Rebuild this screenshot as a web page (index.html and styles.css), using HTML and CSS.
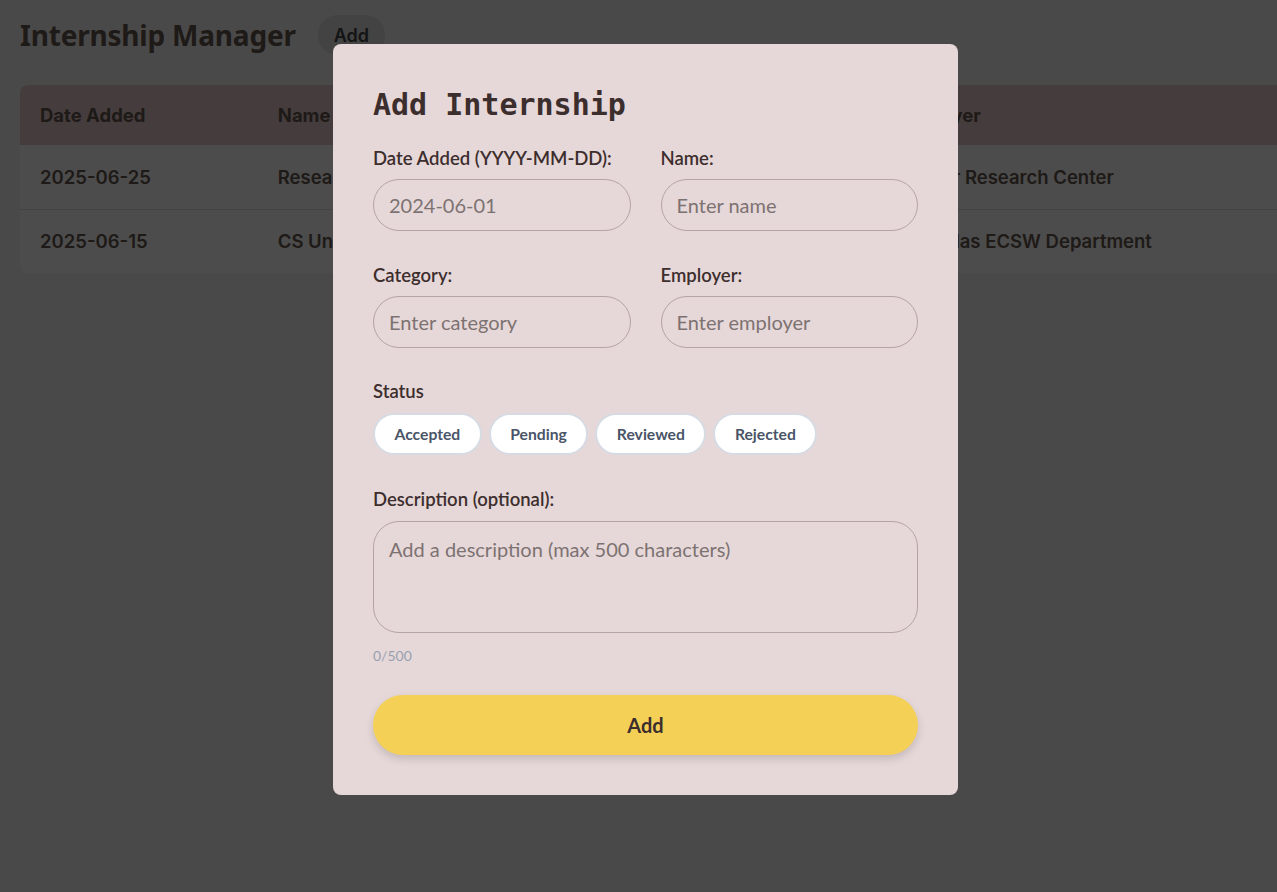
FILE: index.html
```html
<!DOCTYPE html>
<html lang="en">
<head>
<meta charset="utf-8">
<title>Internship Manager</title>
<link rel="stylesheet" href="styles.css">
</head>
<body>
<main class="page">
  <header class="page-header">
    <h1 class="page-title">Internship Manager</h1>
    <button class="header-add" type="button">Add</button>
  </header>
  <div class="table-wrap">
    <table class="table">
      <thead>
        <tr><th class="c-date">Date Added</th><th class="c-name">Name</th><th class="c-cat">Category</th><th class="c-emp">Employer</th><th class="c-status">Status</th></tr>
      </thead>
      <tbody>
        <tr><td>2025-06-25</td><td>Research Intern</td><td>Research</td><td>Cancer Research Center</td><td>Pending</td></tr>
        <tr><td>2025-06-15</td><td>CS Undergrad TA</td><td>Teaching</td><td>UT Dallas ECSW Department</td><td>Accepted</td></tr>
      </tbody>
    </table>
  </div>
</main>

<div class="overlay">
  <form class="modal">
    <h2 class="modal-title">Add Internship</h2>
    <div class="grid">
      <label class="field">
        <span class="label">Date Added (YYYY-MM-DD):</span>
        <input class="input" type="text" placeholder="2024-06-01">
      </label>
      <label class="field">
        <span class="label">Name:</span>
        <input class="input" type="text" placeholder="Enter name">
      </label>
      <label class="field">
        <span class="label">Category:</span>
        <input class="input" type="text" placeholder="Enter category">
      </label>
      <label class="field">
        <span class="label">Employer:</span>
        <input class="input" type="text" placeholder="Enter employer">
      </label>
    </div>
    <div class="status">
      <span class="label">Status</span>
      <div class="pills">
        <button class="pill" type="button">Accepted</button>
        <button class="pill" type="button">Pending</button>
        <button class="pill" type="button">Reviewed</button>
        <button class="pill" type="button">Rejected</button>
      </div>
    </div>
    <label class="field desc">
      <span class="label">Description (optional):</span>
      <textarea class="textarea" placeholder="Add a description (max 500 characters)"></textarea>
    </label>
    <div class="counter">0/500</div>
    <button class="submit" type="button">Add</button>
  </form>
</div>
</body>
</html>
```

FILE: styles.css
```css
* { box-sizing: border-box; }
html, body { margin: 0; padding: 0; }
body {
  background: #f7f3f3;
  font-family: "Inter", "Noto Sans", sans-serif;
  color: #67574d;
  overflow: hidden;
  height: 892px;
}
.page { padding: 13px 0 0 20px; }
.page-header { display: flex; align-items: center; gap: 22px; height: 44px; }
.page-title {
  margin: 0;
  font-family: "Noto Sans", "Open Sans", sans-serif;
  font-size: 28px;
  font-weight: 700;
  color: #67574d;
  letter-spacing: -0.2px;
}
.header-add {
  font-family: inherit;
  font-size: 18px;
  font-weight: 600;
  color: #444;
  background: #dfdfdf;
  border: none;
  border-radius: 20px;
  height: 40px;
  padding: 0 16px;
}
.table-wrap {
  margin-top: 28px;
  width: 1400px;
  border-radius: 8px;
  overflow: hidden;
  background: #fff;
}
.table { border-collapse: collapse; width: 100%; }
.table th, .table td {
  text-align: left;
  font-size: 18.5px;
  padding: 0 20px;
  white-space: nowrap;
}
.table th { background: #e6cbcb; font-weight: 700; height: 60px; }
.table td { font-weight: 600; height: 64px; border-top: 1px solid #dcdcdc; }
.table tbody tr:first-child td { border-top: none; }
.c-date { width: 239px; }
.c-name { width: 312px; }
.c-cat { width: 310px; }
.c-emp { width: 420px; }

.overlay {
  position: fixed;
  inset: 0;
  background: rgba(0, 0, 0, 0.7);
  display: flex;
  justify-content: center;
  align-items: flex-start;
  padding-top: 44px;
}
.modal {
  width: 625px;
  background: #e6d8d8;
  border-radius: 8px;
  padding: 41px 40px 40px;
  font-family: "Lato", "Noto Sans", sans-serif;
  color: #3d2e2e;
  margin-left: 14px;
}
.modal-title {
  margin: 0;
  font-family: "DejaVu Sans Mono", "Liberation Mono", monospace;
  font-size: 30px;
  font-weight: 700;
  color: #3d2e2e;
  line-height: 40px;
  height: 40px;
}
.grid {
  margin-top: 22px;
  display: grid;
  grid-template-columns: minmax(0, 1fr) minmax(0, 1fr);
  column-gap: 30px;
  row-gap: 33px;
}
.field { display: flex; flex-direction: column; gap: 10px; min-width: 0; }
.label { font-size: 18.5px; font-weight: 600; line-height: 22px; color: #3d2e2e; }
.input {
  width: 100%;
  height: 52px;
  border: 1px solid #b5a4a4;
  border-radius: 26px;
  background: transparent;
  padding: 0 15px;
  font-family: inherit;
  font-size: 20px;
  color: #3d2e2e;
  outline: none;
}
.input::placeholder, .textarea::placeholder { color: #7d7272; }
.status { margin-top: 32px; display: flex; flex-direction: column; gap: 11px; }
.pills { display: flex; gap: 7px; }
.pill {
  height: 42px;
  border: 2px solid #d6dbe3;
  background: #fff;
  border-radius: 21px;
  padding: 0 19.5px;
  font-family: inherit;
  font-size: 15.7px;
  font-weight: 700;
  color: #4a5568;
}
.desc { margin-top: 33px; gap: 11px; }
.textarea {
  width: 100%;
  height: 112px;
  resize: none;
  border: 1px solid #b5a4a4;
  border-radius: 26px;
  background: transparent;
  padding: 15px 15px;
  font-family: inherit;
  font-size: 20px;
  line-height: 24px;
  color: #3d2e2e;
  outline: none;
}
.counter {
  margin-top: 13px;
  font-size: 14px;
  color: #97a0b0;
  line-height: 20px;
}
.submit {
  margin-top: 29px;
  width: 100%;
  height: 60px;
  border: none;
  border-radius: 30px;
  background: #f5d056;
  box-shadow: 0 4px 8px rgba(0, 0, 0, 0.15);
  font-family: inherit;
  font-size: 20px;
  font-weight: 700;
  color: #3d2e2e;
}
```
